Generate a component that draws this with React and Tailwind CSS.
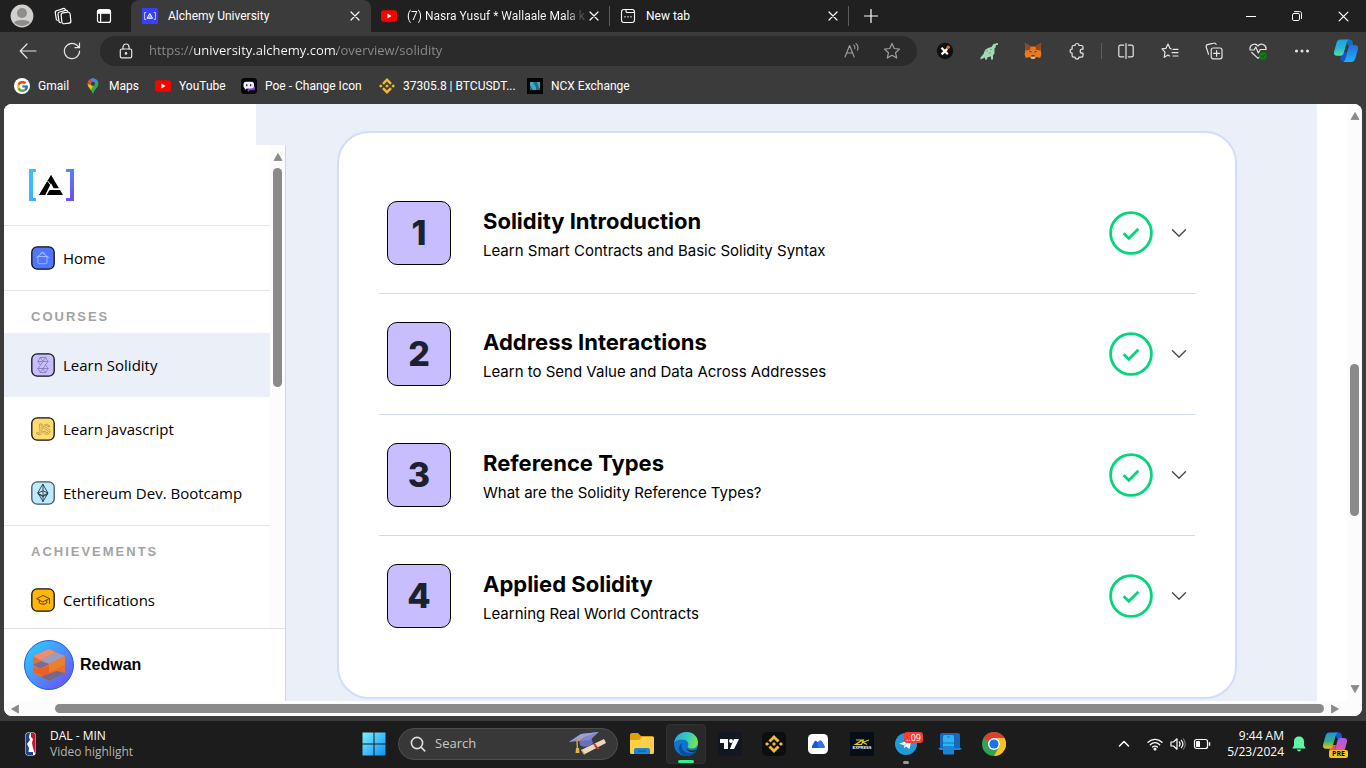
import React from "react";
import { FcGoogle } from "react-icons/fc";
import { SiBinance } from "react-icons/si";

const UI = "font-['Open_Sans','Noto_Sans',sans-serif]";

function Svg({ size = 20, box = 20, className = "", children, sw = 1.2 }) {
  return (
    <svg
      width={size}
      height={size}
      viewBox={`0 0 ${box} ${box}`}
      fill="none"
      stroke="currentColor"
      strokeWidth={sw}
      strokeLinecap="round"
      strokeLinejoin="round"
      className={`shrink-0 ${className}`}
      aria-hidden="true"
    >
      {children}
    </svg>
  );
}

/* ---------- browser icons ---------- */

const Avatar = () => (
  <Svg size={24} box={24}>
    <circle cx="12" cy="12" r="11.4" fill="#d2d0ce" stroke="none" />
    <circle cx="12" cy="9" r="5" fill="#8f8d8b" stroke="none" />
    <path d="M4 18.5c2-3.3 14-3.3 16 0a11 11 0 0 1-16 0z" fill="#8f8d8b" stroke="none" />
  </Svg>
);

const Workspaces = () => (
  <Svg size={18} box={18}>
    <rect x="7.5" y="5.5" width="9" height="11" rx="2" transform="rotate(-6 12 11)" />
    <path d="M5 14.3 4 7.2A2 2 0 0 1 5.6 5l6-1.6M2.3 12.2 1.3 6A2 2 0 0 1 2.8 3.7L9 1.6c1-.3 1.8 0 2.2.8M5 14.3c.1.7.6 1.2 1.4 1.4M2.3 12.2c.1.5.5 1 1 1.1M11.6 3.4c1-.2 1.8.2 2.1 1" />
  </Svg>
);

const TabActions = () => (
  <Svg size={16} box={16}>
    <rect x="1.5" y="1.8" width="13" height="12.6" rx="2" />
    <path d="M1.5 4.2c0-1.6.8-2.4 2.4-2.4h8.2c1.6 0 2.4.8 2.4 2.4v1h-13z" fill="currentColor" />
    <path d="M4.6 5v9" />
  </Svg>
);

const AlchemyFavicon = () => (
  <Svg size={16} box={16}>
    <rect width="16" height="16" rx="1" fill="#363ff9" stroke="none" />
    <path d="M3.8 4.5H2.6v7h1.2M12.2 4.5h1.2v7h-1.2" stroke="#c3c9ff" strokeWidth="1" />
    <path d="M8 5.8 10.6 10.300H5.400z" stroke="#fff" strokeWidth="1" fill="#8f96ff" />
  </Svg>
);

const YouTube = () => (
  <Svg size={16} box={16}>
    <rect y="2.3" width="16" height="11.4" rx="2.6" fill="#f00" stroke="none" />
    <path d="M6.4 5.6v4.8L10.5 8z" fill="#fff" stroke="none" />
  </Svg>
);

const NewTabIcon = () => (
  <Svg size={16} box={16} sw={1.100}>
    <rect x="1.500" y="1.500" width="13" height="13" rx="2.400" />
    <path d="M6 1.500v1.700c0 .9.500 1.300 1.300 1.300h7.200" />
    <path d="M4.500 8.800h1M7.500 8.800h1M10.500 8.800h1" strokeWidth="1.400" strokeLinecap="butt" />
  </Svg>
);

const Cross = ({ size = 10 }) => (
  <Svg size={size} box={10} sw={1.2}>
    <path d="m1 1 8 8M9 1 1 9" />
  </Svg>
);

const MapsPin = () => (
  <Svg size={16} box={16}>
    <clipPath id="pin">
      <path d="M8 .5c-3.200 0-5.300 2.400-5.300 5.300 0 3.700 3.700 5.200 4.700 9.200.2.700 1 .7 1.200 0 1-4 4.700-5.500 4.700-9.200C13.300 2.900 11.200.5 8 .5z" />
    </clipPath>
    <g clipPath="url(#pin)" stroke="none">
      <path d="M0 0h16v16H0z" fill="#34a853" />
      <path d="M0 0h9L4 8H0z" fill="#ea4335" />
      <path d="M5.500 0H14v3L9 6z" fill="#4285f4" />
      <path d="m2 6 4 1 4 3-4 3-4-3z" fill="#fbbc04" />
      <path d="M9 6l5-4v4l-6 9-2-3z" fill="#34a853" />
    </g>
    <circle cx="8" cy="5.800" r="2" fill="#3b3b3b" stroke="none" />
  </Svg>
);

const Poe = () => (
  <Svg size={16} box={16}>
    <rect width="16" height="16" rx="3.500" fill="#050507" stroke="none" />
    <path d="M6 8.500h8v2.500c0 .8-.5 1.300-1.300 1.300H9l-2 1.600z" fill="#7c3fd0" stroke="none" />
    <rect x="2.500" y="3.800" width="10.500" height="6.600" rx="2.600" fill="#f1eff7" stroke="none" />
    <path d="M3.800 10v2l2.400-2z" fill="#f1eff7" stroke="none" />
    <path d="M5.800 6.500v1.200M9.700 6.500v1.200" stroke="#111" strokeWidth="1.200" />
  </Svg>
);

const Ncx = () => (
  <Svg size={16} box={16}>
    <rect width="16" height="16" fill="#030607" stroke="none" />
    <rect x="3" y="4" width="10" height="8" fill="#24697d" stroke="none" />
    <path d="M3 4h3l3 5v3H6L3 7zM10 4h3v6h-1z" fill="#3fa9c2" stroke="none" />
  </Svg>
);

const BackIcon = () => (
  <Svg size={18} box={18}>
    <path d="M17 9H1.500M8 2 1.200 9 8 16" />
  </Svg>
);
const Reload = () => (
  <Svg size={18} box={18}>
    <path d="M16.600 9A7.600 7.600 0 1 1 14 3.300L16.300 5.500M16.500 1.200v4.500H12" />
  </Svg>
);
const Lock = () => (
  <Svg size={16} box={16}>
    <rect x="2.300" y="6" width="11.400" height="8.800" rx="1.600" />
    <path d="M5 6V4a3 3 0 0 1 6 0v2" />
    <circle cx="8" cy="10.400" r=".7" fill="currentColor" />
  </Svg>
);
const ReadAloud = () => (
  <Svg size={18} box={18} sw={1.100}>
    <path d="m2 15 4.600-11.500L11.200 15M3.600 11h6M10.800 3.200c1 .9 1.300 2.200 1 3.500M13 1.600c1.900 1.600 2.400 4.200 1.500 6.600" />
  </Svg>
);
const Star = () => (
  <Svg size={18} box={18}>
    <path d="m9 1.600 2.200 4.900 5.300.6-4 3.600 1.200 5.300L9 13.300 4.300 16l1.200-5.300-4-3.600 5.300-.6z" />
  </Svg>
);
const XBadge = () => (
  <Svg size={18} box={18}>
    <circle cx="9" cy="9" r="8.200" fill="#111" stroke="none" />
    <path d="m5.500 5.800 6.300 6.500M11.300 6.900 5.600 12.400" stroke="#fff" strokeWidth="2.200" strokeLinecap="butt" />
    <circle cx="12.200" cy="5.200" r="1.700" fill="#f26b21" stroke="none" />
  </Svg>
);
const Dino = () => (
  <Svg size={18} box={18}>
    <path
      d="M.5 17.500v-2L3.500 12l1.500-4L8 6l3.500-1 2-3 5-1v1.500l-2.700.8v2l-1.300.9v5l-1.500 2.300v4h-2v-3l-3.500.7-.5 2.300h-2v-2z"
      fill="#a5d8b4"
      stroke="none"
    />
    <path d="M6 9h1.500M9 11h1.500M10.500 7.500h1" stroke="#5f9773" strokeWidth=".8" />
  </Svg>
);
const Fox = () => (
  <Svg size={18} box={18}>
    <g stroke="none">
      <path d="m.8 1 6 3.500h4.400l6-3.500-.6 6.500.8 5-1.200 3.500-4-1-1.700 2h-3l-1.700-2-4 1L.6 12.500l.8-5z" fill="#e8791e" />
      <path d="m.8 1 6 3.500-1 3.500-4.400.500zM17.200 1l-6 3.500 1 3.500 4.400.5z" fill="#8a4a26" />
      <path d="m4.800 9 2.400.3.300 1.500zM13.200 9l-2.400.3-.3 1.500z" fill="#2b2d38" />
      <path d="m7 14.500.500-1h3l.5 1-.5 2.200h-3z" fill="#d5c4b5" />
      <path d="M7.500 13.300h3l.3 1.200H7.200z" fill="#222" />
    </g>
  </Svg>
);
const Puzzle = () => (
  <Svg size={18} box={18}>
    <path d="M5.500 3.500h1.500a2 2 0 0 1 4 0h2.600c.9 0 1.400.5 1.400 1.400v2.300h-.8a2 2 0 1 0 0 4h.8v2.500c0 .9-.5 1.400-1.400 1.400H11a2 2 0 0 1-4 0H5.500c-.9 0-1.400-.5-1.400-1.400v-2.500a2 2 0 0 1 0-4V4.900c0-.9.500-1.400 1.400-1.400z" />
  </Svg>
);
const Split = () => (
  <Svg size={18} box={18}>
    <path d="M6.700 3.200H3.400c-1 0-1.600.6-1.600 1.600v8.400c0 1 .6 1.600 1.600 1.600h3.300M11.300 3.200h3.300c1 0 1.600.6 1.600 1.600v8.400c0 1-.6 1.600-1.600 1.600h-3.300M9 1.500v15" />
  </Svg>
);
const Favorites = () => (
  <Svg size={18} box={18}>
    <path d="M10.200 7 8.900 6.300 7 2 5 6.300l-4 .6 3 3.200-.8 5.200L7 13l1.600.9M12 7.300h5M11 10.600h6M12 14h5" />
  </Svg>
);
const Collections = () => (
  <Svg size={18} box={18}>
    <rect x="6.200" y="6" width="10.800" height="10.800" rx="2" />
    <path d="M11.600 8.500v5.800M8.700 11.400h5.800M3.500 12.200 1.200 5a2 2 0 0 1 1.300-2.400l6.300-1.500c1.100-.3 2 .2 2.300 1.300" />
  </Svg>
);
const Health = () => (
  <Svg size={18} box={18}>
    <path d="M1 7.500C.4 2.500 6.500.4 9 4c2.500-3.600 8.600-1.500 8 3.500M1 8h4l1.800-3L9.300 11l2-3.500H17M2.800 10.500 9 16.400l2-1.800" />
    <circle cx="14" cy="14" r="3.800" fill="#107c10" stroke="none" />
    <path d="m12.700 14.200 1 .9 1.800-2" stroke="#0b4d0b" strokeWidth="1" />
  </Svg>
);
const Dots = () => (
  <Svg size={18} box={18}>
    <circle cx="3.500" cy="9" r=".9" fill="currentColor" />
    <circle cx="9" cy="9" r=".9" fill="currentColor" />
    <circle cx="14.500" cy="9" r=".9" fill="currentColor" />
  </Svg>
);
const Copilot = ({ pre }) => (
  <Svg size={26} box={26}>
    <defs>
      <linearGradient id={pre ? "cpa" : "cpb"} x1="0" y1="0" x2="0" y2="1">
        <stop offset="0" stopColor={pre ? "#1f8fe8" : "#1aa3e8"} />
        <stop offset=".55" stopColor={pre ? "#37b27a" : "#2bb8d0"} />
        <stop offset="1" stopColor={pre ? "#f3c11b" : "#55dfa0"} />
      </linearGradient>
      <linearGradient id={pre ? "cpc" : "cpd"} x1="0" y1="0" x2="0" y2="1">
        <stop offset="0" stopColor={pre ? "#a35df0" : "#2a6be0"} />
        <stop offset="1" stopColor={pre ? "#f0567a" : "#1cb2f5"} />
      </linearGradient>
    </defs>
    <g stroke="none">
      <path d="M8 14h6l-2 7.500c-.5 1.500-3.500 2.500-4.500.5z" fill={pre ? "#f05a3c" : "#1c4fd6"} />
      <path d="M12 1.500h5c1.500 0 2.200 1 2.600 2.300L20.500 8h-5z" fill={pre ? "#1858c8" : "#0f6fc0"} />
      <path d="M7.500 1.500H16c-1.500.8-2 2.200-2.500 4l-2.800 9.500c-.6 1.800-1.500 2.800-3.500 2.800H4c-2.500 0-3.600-1.700-2.900-4.300l2.500-8.700C4.300 2.500 5.500 1.500 7.500 1.500z" fill={`url(#${pre ? "cpa" : "cpb"})`} />
      <path d="M18.500 7H22c2.600 0 3.600 1.800 2.900 4.300l-2.500 8.900c-.7 2.400-2 3.800-4.200 3.800H10c1.500-.8 2-2 2.500-3.800l2.700-9.700C15.800 8.200 16.700 7 18.500 7z" fill={`url(#${pre ? "cpc" : "cpd"})`} />
    </g>
  </Svg>
);

/* ---------- page icons ---------- */

const AlchemyLogo = () => (
  <svg width="46" height="32" viewBox="0 0 46 32" role="img" aria-label="Alchemy University">
    <defs>
      <linearGradient id="lg" x1="0" y1="0" x2="46" y2="32" gradientUnits="userSpaceOnUse">
        <stop offset="0" stopColor="#37c3ff" />
        <stop offset=".35" stopColor="#3fb0ff" />
        <stop offset=".9" stopColor="#6a55f2" />
      </linearGradient>
    </defs>
    <path d="M0 0h7v3H4v26h3v3H0zM37 0h8v32h-8v-3h4V3h-4z" fill="url(#lg)" />
    <path d="m22 6 2.600 4.500-1.900 3.300-1.600-1.300zM19.300 10.800l1.700 3-7.100 12.300H10.200z" fill="#000" />
    <path d="M22 6l8 13.300h-5.300l-2.800-5L16.300 26H10z" fill="#000" />
    <path d="M20.600 21h10.400l3 5H17.700z" fill="#000" />
    <path d="m18.700 12 3 4" stroke="#fff" strokeWidth="1" />
  </svg>
);

function Tile({ fill, border = "#111", children }) {
  return (
    <Svg size={24} box={24} sw={0.9}>
      <rect x=".8" y=".8" width="22.400" height="22.400" rx="5.500" fill={fill} stroke={border} strokeWidth="1.300" />
      {children}
    </Svg>
  );
}

const HomeTile = () => (
  <Tile fill="#5077fb">
    <path d="m5.500 11.500 6-4.800 6 4.800M7 10.500v6c0 .8.500 1.200 1.200 1.200h6.600c.8 0 1.200-.5 1.200-1.200v-6M7 10.500h9M9.500 7.500c0-1.800 4-1.800 4 0" stroke="#a3c0ff" />
  </Tile>
);
const SolidityTile = () => (
  <Tile fill="#c8beff">
    <path d="M9.300 4.500h5.400l2.300 4-2.300 3M9.300 4.500 7 8.500l2.300 3.500L12 8.500h5M7 8.500h5l2.700-4M9.300 4.500 12 8.500M7 15.500l2.300 4h5.400l2.300-4-2.300-3.500-2.700 3.500H7M12 15.500h5M12 15.500l2.700 4M12 15.500l-2.700 4M7 15.500l2.300-3" stroke="#8078ac" strokeWidth=".8" />
  </Tile>
);
const JsTile = () => (
  <Tile fill="#ffdb70">
    <path d="M9 7h2v8.500c0 3-5.500 3-5.500.3h2c0 .9 1.500.9 1.500-.3zM18.500 9.500h-1.800c0-1.500-2.700-1.300-2.700.1 0 1.700 5 1.300 5 4.600 0 4-6.500 4-6.500.3h1.900c0 1.800 2.800 1.700 2.800 0 0-1.900-4.700-1.300-4.700-4.600 0-3.400 6-3.600 6-.4z" stroke="#a18b42" strokeWidth=".7" />
  </Tile>
);
const EthTile = () => (
  <Tile fill="#bdeaff" border="#46545c">
    <path d="m12 3.500 5 8.500-5 8.500L7 12z M12 3.500v17M7 12l5-2.200 5 2.200-5 2.700z" stroke="#27343b" />
    <path d="m7.500 13.200 4.500 2.300 4.500-2.300" stroke="#27343b" />
  </Tile>
);
const CertTile = () => (
  <Tile fill="#ffb60a">
    <path d="m6 10.500 6-3 6.500 3-6.500 3.300zM8.300 12v3c2 1.600 5.400 1.600 7.500 0v-3M18.500 10.500v5" stroke="#4b3a0c" />
  </Tile>
);

const CubeAvatar = () => (
  <Svg size={50} box={50}>
    <defs>
      <linearGradient id="ava" x1="0" y1="0" x2="1" y2="1">
        <stop offset=".2" stopColor="#33bbff" />
        <stop offset=".9" stopColor="#6a55f5" />
      </linearGradient>
    </defs>
    <circle cx="25" cy="25" r="24.500" fill="url(#ava)" stroke="#2560d8" strokeWidth="1" />
    <g stroke="none">
      <path d="m25 9 16 7v17l-16 8-16-8V16z" fill="#e4702c" />
      <path d="m25 9 7 3.300L16 20l-7-4z" fill="#ef8e6a" />
      <path d="m32 12.300 9 3.700-16 8-9-4z" fill="#9d9cc0" />
      <path d="m9 24.500 8-3 8 2.500-9 4.500z" fill="#6c6f9f" />
      <path d="m9 28.500 8 0 8-2v10.500l-16-5z" fill="#f05e28" />
      <path d="m25 24 16-8v9l-16 7z" fill="#e8802f" />
      <path d="m17 36.500 16-5.500 8 2-16 8z" fill="#75688a" />
    </g>
  </Svg>
);

const Check = () => (
  <Svg size={44} box={44} className="text-[#05d57c]">
    <circle cx="22" cy="22" r="20.400" strokeWidth="2.800" />
    <path d="m14.600 22.200 5.200 5 9.600-9.400" strokeWidth="2.800" strokeLinecap="butt" strokeLinejoin="miter" />
  </Svg>
);
const Chevron = () => (
  <Svg size={16} box={16} className="text-[#4a4a4a]" sw={1.400}>
    <path d="m1.500 4.800 6.500 6.400 6.500-6.400" />
  </Svg>
);

/* ---------- scrollbars ---------- */

function Arrow({ dir }) {
  const d = {
    up: "M5 1.500 9 8.500H1z",
    down: "M5 8.500 9 1.500H1z",
    left: "M1.500 5 8.500 1v8z",
    right: "M8.500 5 1.500 1v8z",
  }[dir];
  return (
    <svg width="10" height="10" viewBox="0 0 10 10" className="shrink-0" aria-hidden="true">
      <path d={d} fill="#8a8a8a" stroke="#8a8a8a" strokeWidth=".8" strokeLinejoin="round" />
    </svg>
  );
}

/* ---------- browser chrome ---------- */

function TabStrip() {
  return (
    <div className="flex h-8 items-stretch bg-[#202020] font-['Roboto',sans-serif] text-white">
      <div className="flex w-[131px] shrink-0 items-center gap-5 pl-[10px]">
        <button aria-label="Profile"><Avatar /></button>
        <button aria-label="Workspaces"><Workspaces /></button>
        <button aria-label="Tab actions" className="ml-1"><TabActions /></button>
      </div>
      <div className="flex w-60 items-center rounded-t-lg bg-[#3b3b3b] px-[11px]">
        <AlchemyFavicon />
        <span className="ml-[10px] flex-1 truncate">Alchemy University</span>
        <button aria-label="Close tab"><Cross /></button>
      </div>
      <div className="flex w-[238px] items-center px-[10px]">
        <YouTube />
        <span className="ml-[10px] flex-1 whitespace-nowrap bg-[linear-gradient(90deg,#fff_160px,#555_172px)] bg-clip-text text-transparent">
          (7) Nasra Yusuf * Wallaale Mala k
        </span>
        <button aria-label="Close tab"><Cross /></button>
      </div>
      <div className="my-[6px] w-px bg-[#5c5c5c]" />
      <div className="flex w-[238px] items-center px-[10px]">
        <NewTabIcon />
        <span className="ml-[10px] flex-1 truncate">New tab</span>
        <button aria-label="Close tab"><Cross /></button>
      </div>
      <div className="my-[6px] w-px bg-[#5c5c5c]" />
      <button aria-label="New tab" className="flex w-11 items-center justify-center">
        <Svg size={14} box={14}><path d="M7 0.500v13M.5 7h13" /></Svg>
      </button>
      <div className="ml-auto flex">
        <button aria-label="Minimize" className="flex w-[46px] items-center justify-center">
          <Svg size={10} box={10} sw={1}><path d="M0 5.500h10" /></Svg>
        </button>
        <button aria-label="Restore" className="flex w-[46px] items-center justify-center">
          <Svg size={10} box={10} sw={1}>
            <rect x=".5" y="2.500" width="7" height="7" rx="1.300" />
            <path d="M2.500.6h5C9 .6 9.500 1.300 9.500 2.500v5" />
          </Svg>
        </button>
        <button aria-label="Close window" className="flex w-[46px] items-center justify-center">
          <Cross size={11} />
        </button>
      </div>
    </div>
  );
}

function IconButton({ label, children }) {
  return (
    <button aria-label={label} className="flex h-8 w-8 shrink-0 items-center justify-center">
      {children}
    </button>
  );
}

function Toolbar() {
  return (
    <div className="flex h-[38px] items-center pl-[12px] pr-1 text-[#e6e6e6]">
      <IconButton label="Back"><BackIcon /></IconButton>
      <div className="w-3" />
      <IconButton label="Refresh"><Reload /></IconButton>
      <div className="ml-3 mr-3 flex h-[30px] flex-1 items-center rounded-full bg-[#2b2b2b] pl-[10px] pr-[9px]">
        <IconButton label="Site information"><Lock /></IconButton>
        <input
          aria-label="Address"
          defaultValue="https://university.alchemy.com/overview/solidity"
          className="ml-[7px] min-w-0 flex-1 bg-[linear-gradient(90deg,#8d8d8d_0_45px,#fff_45px_188px,#8d8d8d_188px)] bg-clip-text text-[13px] text-transparent outline-none"
        />
        <div className="flex gap-2 text-[#a0a0a0]">
          <IconButton label="Read aloud"><ReadAloud /></IconButton>
          <IconButton label="Add to favorites"><Star /></IconButton>
        </div>
      </div>
      <div className="flex gap-3">
        <IconButton label="X extension"><XBadge /></IconButton>
        <IconButton label="Dino extension"><Dino /></IconButton>
        <IconButton label="Fox wallet"><Fox /></IconButton>
        <IconButton label="Extensions"><Puzzle /></IconButton>
      </div>
      <div className="mx-2 h-4 w-px bg-[#5f5f5f]" />
      <div className="flex gap-3">
        <IconButton label="Split screen"><Split /></IconButton>
        <IconButton label="Favorites"><Favorites /></IconButton>
        <IconButton label="Collections"><Collections /></IconButton>
        <IconButton label="Browser essentials"><Health /></IconButton>
        <IconButton label="Settings and more"><Dots /></IconButton>
        <IconButton label="Copilot"><Copilot /></IconButton>
      </div>
    </div>
  );
}

const bookmarks = [
  { label: "Gmail", width: "w-[71px]", icon: <span className="flex h-4 w-4 items-center justify-center rounded-full bg-white"><FcGoogle size={13} /></span> },
  { label: "Maps", width: "w-[70px]", icon: <MapsPin /> },
  { label: "YouTube", width: "w-[86px]", icon: <YouTube /> },
  { label: "Poe - Change Icon", width: "w-[138px]", icon: <Poe /> },
  { label: "37305.8 | BTCUSDT...", width: "w-[148px]", icon: <SiBinance size={16} color="#f3ba2f" /> },
  { label: "NCX Exchange", width: "w-[110px]", icon: <Ncx /> },
];

function Bookmarks() {
  return (
    <nav aria-label="Bookmarks" className="flex h-[34px] items-center pb-[2px] pl-[14px] font-['Roboto',sans-serif] text-white">
      {bookmarks.map((b) => (
        <a key={b.label} href="#" className={`flex shrink-0 items-center gap-2 whitespace-nowrap ${b.width}`}>
          <span className="shrink-0">{b.icon}</span>
          {b.label}
        </a>
      ))}
    </nav>
  );
}

/* ---------- page ---------- */

function NavItem({ icon, label, active }) {
  return (
    <a
      href="#"
      className={`flex h-16 shrink-0 items-center gap-2 pl-[27px] text-[15px] text-black ${active ? "bg-[#ebeff8]" : ""}`}
    >
      {icon}
      <span className="whitespace-nowrap">{label}</span>
    </a>
  );
}

function NavHeading({ children }) {
  return (
    <h2 className="flex h-[42px] shrink-0 items-center pl-[27px] pt-[10px] font-['Liberation_Sans',sans-serif] text-[13px] font-bold tracking-[2px] text-[#a3a3a3]">
      {children}
    </h2>
  );
}

function Sidebar() {
  return (
    <aside className="flex w-[282px] shrink-0 flex-col bg-[#ebeff8]">
      <div className="h-[41px] w-[252px] shrink-0 bg-white" />
      <div className="flex min-h-0 flex-1 flex-col border-r border-[#d3d6de] bg-white">
        <div className="flex min-h-0 flex-1">
          <nav aria-label="Courses" className="flex min-w-0 flex-1 flex-col overflow-hidden">
            <div className="flex h-[81px] shrink-0 items-center border-b border-[#e5e5e5] pl-[25px]">
              <AlchemyLogo />
            </div>
            <div className="shrink-0 border-b border-[#e5e5e5]">
              <NavItem icon={<HomeTile />} label="Home" />
            </div>
            <NavHeading>COURSES</NavHeading>
            <NavItem icon={<SolidityTile />} label="Learn Solidity" active />
            <NavItem icon={<JsTile />} label="Learn Javascript" />
            <div className="shrink-0 border-b border-[#e5e5e5]">
              <NavItem icon={<EthTile />} label="Ethereum Dev. Bootcamp" />
            </div>
            <NavHeading>ACHIEVEMENTS</NavHeading>
            <NavItem icon={<CertTile />} label="Certifications" />
          </nav>
          <div className="flex w-[15px] flex-col items-center gap-[6px] bg-[#fcfcfc] pt-[7px]">
            <Arrow dir="up" />
            <div className="h-[219px] w-[9px] rounded-full bg-[#8a8a8a]" />
          </div>
        </div>
        <div className="flex h-[73px] shrink-0 items-center gap-[6px] border-t border-[#e0e0e0] pl-5">
          <CubeAvatar />
          <span className="font-['Liberation_Sans',sans-serif] text-base font-bold text-black">Redwan</span>
        </div>
      </div>
    </aside>
  );
}

const lessons = [
  ["Solidity Introduction", "Learn Smart Contracts and Basic Solidity Syntax"],
  ["Address Interactions", "Learn to Send Value and Data Across Addresses"],
  ["Reference Types", "What are the Solidity Reference Types?"],
  ["Applied Solidity", "Learning Real World Contracts"],
];

function Lesson({ n, title, text, last }) {
  return (
    <li className={`flex h-[121px] items-center border-b px-2 ${last ? "border-transparent" : "border-[#d0d9ea]"}`}>
      <div className="flex h-16 w-16 shrink-0 items-center justify-center rounded-[10px] border border-black bg-[#c8beff] font-['Inter',sans-serif] text-[34px] font-extrabold text-[#1b212d]">
        {n}
      </div>
      <div className="ml-8 flex-1 pt-1 text-black">
        <h3 className="font-['Inter',sans-serif] text-[22px] font-bold leading-8">{title}</h3>
        <p className="font-['Inter',sans-serif] text-[15px] leading-7">{text}</p>
      </div>
      <Check />
      <button aria-label={`Expand ${title}`} className="ml-[18px]"><Chevron /></button>
    </li>
  );
}

function Page() {
  return (
    <div className="mx-1 flex min-h-0 flex-1 flex-col overflow-hidden rounded-lg bg-white">
      <div className="flex min-h-0 flex-1">
        <Sidebar />
        <main className="min-w-0 flex-1 overflow-hidden bg-[#ebeff8] pl-[51px] pr-[80px] pt-[27px]">
          <ol className="rounded-[32px] border-2 border-[#d2dcff] bg-white p-10">
            {lessons.map(([title, text], i) => (
              <Lesson key={title} n={i + 1} title={title} text={text} last={i === lessons.length - 1} />
            ))}
          </ol>
        </main>
        <div className="w-[30px] bg-white" />
        <div className="flex w-[15px] flex-col items-center bg-[#fcfcfc] py-[7px]">
          <Arrow dir="up" />
          <div className="flex-[243]" />
          <div className="w-[9px] flex-[152] rounded-full bg-[#8a8a8a]" />
          <div className="flex-[168]" />
          <Arrow dir="down" />
        </div>
      </div>
      <div className="flex h-[15px] shrink-0 items-center bg-[#fcfcfc] pl-[6px] pr-[22px]">
        <Arrow dir="left" />
        <div className="ml-[35px] mr-[6px] h-[9px] flex-1 rounded-full bg-[#8a8a8a]" />
        <Arrow dir="right" />
      </div>
    </div>
  );
}

/* ---------- taskbar ---------- */

const NbaLogo = () => (
  <svg width="11" height="24" viewBox="0 0 11 24" aria-hidden="true">
    <rect x=".5" y=".5" width="10" height="23" rx="2" fill="#fff" />
    <path d="M1 2.500Q1 1 2.500 1H5L4 5l1 3-3 4 2 4-1 7Q1 23 1 21.500z" fill="#1d428a" />
    <path d="M6 1h2.500Q10 1 10 2.500v19L8 16l-1-5 1-4-2-2z" fill="#c8102e" />
    <path d="M2 20h6v3H2z" fill="#1d428a" />
  </svg>
);
const Windows = () => (
  <svg width="24" height="24" viewBox="0 0 24 24" aria-hidden="true">
    <defs>
      <linearGradient id="win" x1="0" y1="0" x2="1" y2="1">
        <stop offset="0" stopColor="#7df0ff" />
        <stop offset="1" stopColor="#0a90f5" />
      </linearGradient>
    </defs>
    <path d="M.5.5h11v11H.5zM12.500.5h11v11h-11zM.5 12.500h11v11H.5zM12.500 12.500h11v11h-11z" fill="url(#win)" />
  </svg>
);
const GradCap = () => (
  <svg width="40" height="26" viewBox="0 0 40 26" aria-hidden="true">
    <path d="m11 9 12-3 2 6c-3 4-11 5-13 2z" fill="#6a70b8" />
    <path d="M1 11 13 3l18-2-9 8z" fill="#7f86cb" />
    <path d="m1 11 12-8 18-2-15 5z" fill="#9aa0d8" />
    <path d="m15 6-6 4 .5 9" stroke="#d9a53c" strokeWidth="1.400" fill="none" />
    <path d="m8 17 3 0 .5 5h-4z" fill="#e5b14a" />
    <path d="m13 19 23-11 2 4-22 11.500z" fill="#ead9bd" />
    <path d="m13 19 1-.5 3 4.500-1 .5z" fill="#c9ad82" />
    <path d="m26 12.500 3 4.500M27 15l4 3" stroke="#c23b33" strokeWidth="2" />
  </svg>
);
const Explorer = () => (
  <svg width="26" height="24" viewBox="0 0 26 24" aria-hidden="true">
    <path d="M1 3q0-2 2-2h6l3 3h11q2 0 2 2v6H1z" fill="#e19e0c" />
    <path d="M1 8h9l3-3h11q1 0 1 1v14q0 2-1 2H2q-1 0-1-2z" fill="#ffcf48" />
    <path d="M5 22v-4q0-2 2-2h12q2 0 2 2v4z" fill="#1b83d6" />
    <path d="M9 19h8" stroke="#0c5ea8" strokeWidth="1.200" />
  </svg>
);
const Edge = () => (
  <svg width="26" height="26" viewBox="0 0 26 26" aria-hidden="true">
    <defs>
      <linearGradient id="ed" x1="0" y1="0" x2="1" y2=".3">
        <stop offset="0" stopColor="#27a4e8" />
        <stop offset=".6" stopColor="#35c9c0" />
        <stop offset="1" stopColor="#6be456" />
      </linearGradient>
    </defs>
    <circle cx="13" cy="13" r="12" fill="#1274ca" />
    <path d="M1.200 11.500C2.500 4.500 8 1 13.500 1 20.500 1 25 6 25 11.500c0 4-3 6-6.500 6-3 0-4-1-3.500-2.500 1.500-3-1-6.500-5.500-6.500-4 0-7 1-8.300 3z" fill="url(#ed)" />
    <path d="M9 12.500c-1.500 5 2 9.500 8 9.500 3 0 5-1 6.500-2-2 3.500-6 5-10 5C8 25 5.500 20 5.800 17c.2-2 1.200-3.700 3.200-4.500z" fill="#0c4f9e" />
    <path d="M13 12.500c-1.500 1.500-1 5 2 6.300 3 1.200 6.500.8 9-.6-.7 1.500-2 2.600-4 3.100-5.500 0-9.500-5-7-8.800z" fill="#292929" />
  </svg>
);
const TradingView = () => (
  <svg width="24" height="24" viewBox="0 0 24 24" aria-hidden="true">
    <rect width="24" height="24" fill="#131722" />
    <path d="M2 7h8v10H6v-6H2zM16 17h-4.200L16 7h5z" fill="#fff" />
    <circle cx="13" cy="9" r="2" fill="#fff" />
  </svg>
);
const BinanceApp = () => (
  <span className="flex h-6 w-6 items-center justify-center rounded-[5px] bg-[#0b0e11]">
    <SiBinance size={18} color="#f3ba2f" />
  </span>
);
const Mountain = () => (
  <svg width="20" height="20" viewBox="0 0 20 20" aria-hidden="true">
    <rect width="20" height="20" rx="4.500" fill="#fff" />
    <path d="M4 14v-2l2.500-4.500q1.200-1.500 2.500 0l1 1 1-1.300q1.500-1.500 3 .5L16.500 12v2z" fill="#1d55d8" />
    <path d="m10.500 14-1-5 1.500-1.800q1.500-1.500 3 .5L16.500 12v2z" fill="#3470e8" />
  </svg>
);
const Zk = () => (
  <svg width="24" height="24" viewBox="0 0 24 24" aria-hidden="true">
    <rect width="24" height="24" fill="#070d15" />
    <path d="M6 8h6.500L5.500 12.500h6.500M13.500 8l-2 4.500M19 8l-6 2.300 4 2.200" stroke="#e8cf1e" strokeWidth="1.200" fill="none" />
    <text x="12" y="17" textAnchor="middle" fontSize="4" fontWeight="bold" fontFamily="Liberation Sans" fill="#fff">EXPRESS</text>
  </svg>
);
const Telegram = () => (
  <svg width="22" height="22" viewBox="0 0 22 22" aria-hidden="true">
    <circle cx="11" cy="11" r="11" fill="#2399d5" />
    <path d="M4 10.800 16.500 6 14.500 16l-3.500-2.500-1.800 1.800-.4-3.300-4.800-1.200z" fill="#fff" />
    <path d="m8.800 12 5.500-4.200-4.300 5-.8 2.500z" fill="#b5d8ea" />
  </svg>
);
const PhoneLink = () => (
  <svg width="24" height="24" viewBox="0 0 24 24" aria-hidden="true">
    <path d="M2 3q0-2 2-2h16q2 0 2 2v13H2z" fill="#1668ba" />
    <path d="M0 16h24l-2 2H2z" fill="#2382d8" />
    <rect x="5" y="3" width="11" height="19" rx="1.500" fill="#2fb4f0" />
    <path d="M9 5h3M5 11h11" stroke="#0f79c4" strokeWidth="1.200" />
    <path d="M5 14h11v7q0 1.500-1 1.500H6.500Q5 22.500 5 21z" fill="#1a86d2" />
  </svg>
);
const Chrome = () => (
  <svg width="24" height="24" viewBox="0 0 24 24" aria-hidden="true">
    <circle cx="12" cy="12" r="12" fill="#34a053" />
    <path d="M12 0a12 12 0 0 1 10.400 6H12a6 6 0 0 0-5.200 3L1.600 6A12 12 0 0 1 12 0z" fill="#e33b2e" />
    <path d="M22.400 6A12 12 0 0 1 12 24l5.200-9A6 6 0 0 0 17.200 9 6 6 0 0 0 12 6z" fill="#fcc31e" />
    <circle cx="12" cy="12" r="6" fill="#fff" />
    <circle cx="12" cy="12" r="4.600" fill="#1a73e8" />
  </svg>
);

function AppButton({ label, active, running, children }) {
  return (
    <button
      aria-label={label}
      className={`relative flex h-10 w-10 shrink-0 items-center justify-center rounded ${active ? "border border-[#303030] bg-[#292929]" : ""}`}
    >
      {children}
      {active && <span className="absolute bottom-0 h-[3px] w-4 rounded-full bg-[#2bf28c]" />}
      {running && <span className="absolute bottom-0 h-[3px] w-[6px] rounded-full bg-[#9a9a9a]" />}
    </button>
  );
}

function Taskbar() {
  return (
    <footer className="mt-[5px] grid h-[47px] shrink-0 grid-cols-[1fr_auto_1fr] items-center bg-[#1c1c1c] pb-[2px] text-white">
      <button className="flex items-center gap-[14px] pl-[25px] text-left leading-4">
        <NbaLogo />
        <span>
          DAL - MIN
          <br />
          <span className="text-[#b5b5b5]">Video highlight</span>
        </span>
      </button>
      <div className="flex items-center gap-1 pl-[2px]">
        <AppButton label="Start"><Windows /></AppButton>
        <label className="flex h-8 w-[220px] items-center rounded-full border border-[#4c4c4c] bg-[#383838] pl-[11px] pr-[9px]">
          <Svg size={16} box={16} sw={1.600} className="text-[#dedede]">
            <circle cx="7" cy="7" r="5.600" />
            <path d="m11.200 11.200 3.500 3.700" />
          </Svg>
          <input
            type="text"
            aria-label="Search"
            placeholder="Search"
            className="ml-[9px] min-w-0 flex-1 bg-transparent text-[13px] outline-none placeholder:text-[#c8c8c8]"
          />
          <GradCap />
        </label>
        <AppButton label="File Explorer"><Explorer /></AppButton>
        <AppButton label="Edge" active><Edge /></AppButton>
        <AppButton label="TradingView"><TradingView /></AppButton>
        <AppButton label="Binance"><BinanceApp /></AppButton>
        <AppButton label="Mountain"><Mountain /></AppButton>
        <AppButton label="ZK Express"><Zk /></AppButton>
        <AppButton label="Telegram" running>
          <Telegram />
          <span className="absolute right-[3px] top-[8px] rounded-[3px] bg-[#f23c34] px-[2px] text-[9px] leading-[11px]">..09</span>
        </AppButton>
        <AppButton label="Phone Link"><PhoneLink /></AppButton>
        <AppButton label="Chrome"><Chrome /></AppButton>
      </div>
      <div className="flex items-center justify-end pr-[18px]">
        <button aria-label="Show hidden icons" className="mr-[17px]">
          <Svg size={12} box={12} sw={1.500}><path d="m1.500 8 4.500-4.500L10.500 8" /></Svg>
        </button>
        <button aria-label="Network, volume and battery" className="mr-4 flex items-center gap-[7px]">
          <Svg size={16} box={16} sw={1.300}>
            <path d="M1 6.300c4-4 10-4 14 0M3.300 8.700c2.700-2.700 6.700-2.700 9.400 0M5.600 11c1.300-1.300 3.500-1.300 4.800 0" />
            <circle cx="8" cy="13" r=".9" fill="currentColor" />
          </Svg>
          <Svg size={16} box={16}>
            <path d="M1 6h2.500L7 2.800v10.400L3.500 10H1zM9.300 6c1 1.200 1 2.800 0 4M11.300 4.300c2 2.200 2 5.200 0 7.400" />
            <path d="M13.300 2.800c2.600 3 2.600 7.400 0 10.400" stroke="#777" />
          </Svg>
          <Svg size={18} box={18}>
            <rect x="1.500" y="4.500" width="13" height="9" rx="2" />
            <path d="M16.500 7.800v2.500" strokeWidth="1.600" />
            <rect x="3" y="6" width="4" height="6" rx=".6" fill="currentColor" stroke="none" />
          </Svg>
        </button>
        <button className="mr-[8px] text-right leading-4">
          9:44 AM
          <br />
          5/23/2024
        </button>
        <button aria-label="Notifications" className="mr-[16px]">
          <svg width="14" height="16" viewBox="0 0 14 16" aria-hidden="true">
            <path d="M7 .5c3 0 5 2 5 5v4l1.700 3H.3L2 9.500v-4c0-3 2-5 5-5zM4.800 13.500h4.400Q8.500 15.500 7 15.500t-2.200-2z" fill="#5ef7a5" />
          </svg>
        </button>
        <button aria-label="Copilot preview" className="relative">
          <Copilot pre />
          <span className="absolute -bottom-px right-0 rounded-[2px] bg-[#f8c41c] px-[3px] text-[7px] font-bold leading-[8px] text-black">PRE</span>
        </button>
      </div>
    </footer>
  );
}

export default function App() {
  return (
    <div className={`flex h-screen flex-col bg-[#3b3b3b] text-xs ${UI}`}>
      <TabStrip />
      <Toolbar />
      <Bookmarks />
      <Page />
      <Taskbar />
    </div>
  );
}
